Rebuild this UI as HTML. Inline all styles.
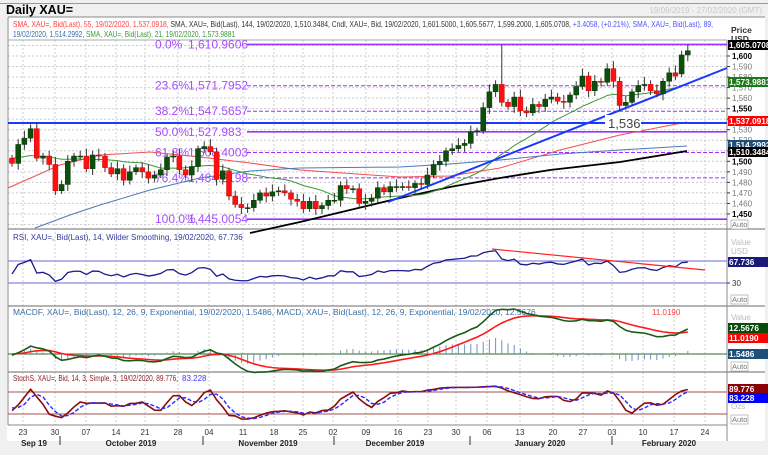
<!DOCTYPE html>
<html><head><meta charset="utf-8"><style>
html,body{margin:0;padding:0;background:#f0f0f0;width:768px;height:455px;overflow:hidden;font-family:"Liberation Sans",sans-serif}
svg{position:absolute;left:0;top:0}
</style></head><body>
<svg id="s" width="768" height="455" xmlns="http://www.w3.org/2000/svg" font-family="Liberation Sans, sans-serif">
<rect x="0" y="0" width="768" height="455" fill="#f0f0f0"/>
<rect x="0" y="3" width="768" height="1" fill="#999"/>
<rect x="7" y="17" width="758" height="424" fill="#fff"/>
<text x="6" y="14" font-size="12.5" font-weight="bold" fill="#000">Daily XAU=</text>
<text x="762" y="13" font-size="8" fill="#c8c8c8" text-anchor="end">19/09/2019 - 27/02/2020 (GMT)</text>
<text x="13" y="27" font-size="8" textLength="700" lengthAdjust="spacingAndGlyphs"><tspan fill="#ff4040">SMA, XAU=, Bid(Last),  55,  19/02/2020, 1,537.0918, </tspan><tspan fill="#333">SMA, XAU=, Bid(Last),   144,  19/02/2020, 1,510.3484, Cndl, XAU=, Bid,  19/02/2020, 1,601.5000, 1,605.5677, 1,599.2000, 1,605.0708, </tspan><tspan fill="#5050ff">+3.4058, (+0.21%), SMA, XAU=, Bid(Last),  89,</tspan></text>
<text x="13" y="37" font-size="8" textLength="222" lengthAdjust="spacingAndGlyphs"><tspan fill="#3a6ea5">19/02/2020,  1,514.2992, </tspan><tspan fill="#3a9a3a">SMA, XAU=, Bid(Last),  21,  19/02/2020, 1,573.9881</tspan></text>
<g id="g"></g>
</svg>
<script>
var NS="http://www.w3.org/2000/svg",G=document.getElementById("g");
function el(t,a,txt){var e=document.createElementNS(NS,t);for(var k in a)e.setAttribute(k,a[k]);if(txt!=null)e.textContent=txt;G.appendChild(e);return e;}
function ln(x1,y1,x2,y2,c,w,d){var a={x1:x1,y1:y1,x2:x2,y2:y2,stroke:c,"stroke-width":w||1};if(d)a["stroke-dasharray"]=d;return el("line",a);}
function tx(x,y,s,sz,c,o){var a={x:x,y:y,"font-size":sz,fill:c};if(o)for(var k in o)a[k]=o[k];return el("text",a,s);}
var L=8,R=727;
var wk=[23,55,86,116,145,178,209,243,274,303,333,366,398,428,456,487,520,553,583,612,643,674,705];
wk.forEach(function(x){ln(x,40,x,425,"#ccc",1,"2,2");});
function py(p){return 56+(1600-p)*1.053;}
for(var p=1440;p<=1610;p+=10){var y=py(p);if(y>40&&y<228)ln(L,y,R,y,"#ccc",1,"2,2");}
[229,306,372].forEach(function(y){ln(L,y,765,y,"#888",1.2);});
ln(L,17,L,425,"#888",1);ln(R,40,R,441,"#888",1);ln(L,425,R,425,"#888",1);
ln(L,17,765,17,"#888",1);ln(L,40,R,40,"#aaa",1);
var C=[1498,1516,1522,1531,1503,1505,1497,1472,1478,1500,1505,1505,1493,1506,1505,1494,1488,1493,1482,1490,1494,1490,1484,1487,1492,1504,1505,1492,1487,1495,1512,1514,1509,1483,1491,1467,1459,1456,1456,1463,1470,1467,1471,1472,1470,1464,1462,1455,1462,1455,1458,1463,1463,1477,1474,1474,1460,1462,1465,1475,1471,1476,1476,1476,1475,1479,1478,1487,1497,1500,1510,1512,1515,1517,1528,1529,1551,1566,1573,1556,1552,1561,1548,1546,1554,1552,1559,1561,1557,1556,1563,1571,1581,1567,1576,1575,1588,1576,1553,1556,1566,1572,1573,1567,1564,1576,1584,1581,1601,1605];
var N=C.length;function X(i){return 12+i*6.2;}
var fib=[["0.0%","1,610.9606",1610.96,0],["23.6%","1,571.7952",1571.80,1],["38.2%","1,547.5657",1547.57,1],["50.0%","1,527.983",1527.98,0],["61.8%","1,508.4003",1508.40,1],["76.4%","1,484.2198",1484.22,1],["100.0%","1,445.0054",1445.01,0]];
fib.forEach(function(f){var y=py(f[2]);ln(247,y,R,y,"#9b30ff",f[3]?1:1.6,f[3]?"4,2":null);
tx(155,y+4,f[0],12,"#a64dff");tx(188,y+4,f[1],12,"#a64dff");});
function pl(pts,c,w,d){var a={points:pts.map(function(p){return p[0]+","+p[1]}).join(" "),fill:"none",stroke:c,"stroke-width":w};if(d)a["stroke-dasharray"]=d;return el("polyline",a);}
pl([[8,188],[60,165],[100,155],[150,152],[200,157],[250,163],[300,170],[400,177],[450,176],[500,168],[560,150],[620,135],[687,122]],"#f05050",1);
pl([[35,228],[70,215],[100,205],[150,190],[200,178],[250,171],[300,168],[400,167],[450,164],[500,160],[560,154],[620,150],[687,146]],"#4a7ab8",1);
pl([[250,233],[300,222],[350,210],[400,198],[450,187],[500,178],[550,170],[620,162],[687,151]],"#000",1.8);
var hist=[1500,1505,1510,1515,1510,1505,1500,1498,1500,1502,1505,1506,1504,1500,1498,1500,1502,1505,1500,1498];var A=hist.concat(C);
var g21=[];for(var i=0;i<N;i++){var s=0;for(var k=0;k<21;k++)s+=A[i+20-k];g21.push([X(i),py(s/21)]);}
pl(g21,"#3a9a3a",1);
ln(388,202,R,68,"#1a3aff",2);ln(L,123,R,123,"#1a3aff",2);
el("rect",{x:605,y:115,width:36,height:16,fill:"#fff"});tx(608,128,"1,536",13,"#444");
var O=[1503].concat(C.slice(0,N-1));
for(var i=0;i<N;i++){var o=O[i],c=C[i];if(i==N-1)o=1601;if(i==N-2)o=1583;var hi=Math.max(o,c)+3+((i*7)%5),lo=Math.min(o,c)-3-((i*3)%4);if(i==79)hi=1611;
var x=X(i),up=c>=o,col=up?"#0b4f0b":"#ff1010";ln(x,py(hi),x,py(lo),"#333",1);
var y1=py(Math.max(o,c)),y2=py(Math.min(o,c));el("rect",{x:x-2.5,y:y1,width:5,height:Math.max(1,y2-y1),fill:col,stroke:up?"#063306":"#c00","stroke-width":0.5});}
tx(731,33,"Price",8.5,"#333",{"font-weight":"bold"});tx(731,42,"USD",8.5,"#333",{"font-weight":"bold"});
for(var p=1450;p<=1600;p+=10){var y=py(p);ln(R,y,R+3,y,"#333",1);tx(732,y+3,"1,"+String(p).slice(1),8,p%50==0?"#000":"#777",p%50==0?{"font-weight":"bold"}:{});}
function box(y,t,bg){el("rect",{x:728,y:y-5,width:40,height:10,fill:bg});tx(729,y+3,t,8.3,"#fff",{"font-weight":"bold"});}
box(45,"1,605.0708","#000");box(82,"1,573.9881","#1a7a1a");box(121,"1,537.0918","#ff0000");box(145,"1,514.2992","#1f4e79");box(152,"1,510.3484","#000");
function auto(y){el("rect",{x:731,y:y-7,width:17,height:9,fill:"#fff",stroke:"#999","stroke-width":0.6});tx(732,y,"Auto",7.5,"#777");}
auto(227);auto(302);auto(369);auto(422);
tx(13,240,"RSI, XAU=, Bid(Last),  14, Wilder Smoothing, 19/02/2020, 67.736",8,"#333a99");
ln(L,261,R,261,"#8888dd",1.2);ln(L,283,R,283,"#8888dd",1.2);
var ag=0,al=0,rsi=[];for(var i=1;i<A.length;i++){var d=A[i]-A[i-1];if(i<=14){ag+=Math.max(d,0)/14;al+=Math.max(-d,0)/14;}else{ag=(ag*13+Math.max(d,0))/14;al=(al*13+Math.max(-d,0))/14;}if(i>=20)rsi.push(100-100/(1+ag/(al||0.01)));}
pl(rsi.map(function(v,i){return [X(i),Math.max(248,Math.min(282,261+(70-v)*0.575))]}),"#1a1a8c",1.3);
ln(492,249,705,270,"#ff2020",1.2);
tx(731,245,"Value",8,"#bbb");tx(731,254,"USD",8,"#bbb");box(262,"67.736","#1a1a7a");tx(732,286,"30",8,"#333");ln(R,283,R+3,283,"#333",1);
el("text",{x:13,y:315,"font-size":8,fill:"#3a6ea5",textLength:525,lengthAdjust:"spacingAndGlyphs"},"MACDF, XAU=, Bid(Last),  12, 26, 9, Exponential,  19/02/2020, 1.5486, MACD, XAU=, Bid(Last),  12, 26, 9, Exponential,  19/02/2020, 12.5676,");
tx(652,315,"11.0190",8,"#ff4040");
ln(L,354,R,354,"#2a6a2a",1);
var e12=A[0],e26=A[0],sg=0,m=[],sgl=[];for(var i=0;i<A.length;i++){e12+=(A[i]-e12)*2/13;e26+=(A[i]-e26)*2/27;var mv=e12-e26;sg+=(mv-sg)*0.2;if(i>=20){m.push(mv);sgl.push(sg);}}
for(var i=0;i<N;i++){var h=(m[i]-sgl[i])*2;ln(X(i),354,X(i),354-h,"#6f8fbf",1);}
pl(sgl.map(function(v,i){return [X(i),354-v*2]}),"#ff1a1a",1.6);
pl(m.map(function(v,i){return [X(i),354-v*2]}),"#1a5a1a",1.6);
tx(731,320,"Value",8,"#bbb");box(328,"12.5676","#0a4a0a");box(338,"11.0190","#ff0000");box(354,"1.5486","#1f4e79");
el("text",{x:13,y:381,"font-size":8,fill:"#8b1a1a",textLength:165,lengthAdjust:"spacingAndGlyphs"},"StochS, XAU=, Bid,  14, 3, Simple, 3, 19/02/2020, 89.776,");
tx(182,381,"83.228",8,"#3a3aff");
ln(L,392,R,392,"#a05050",1);ln(L,414,R,414,"#a05050",1);
var k=[];for(var i=0;i<A.length;i++){var s=A.slice(Math.max(0,i-13),i+1),hh=Math.max.apply(0,s)+4,ll=Math.min.apply(0,s)-4;k.push(100*(A[i]-ll)/(hh-ll));}
var ks=[],ds=[];for(var i=2;i<A.length;i++)ks.push((k[i]+k[i-1]+k[i-2])/3);for(var i=2;i<ks.length;i++)ds.push((ks[i]+ks[i-1]+ks[i-2])/3);
var off=A.length-N;
pl(C.map(function(_,i){return [X(i),392+(80-ks[i+off-2])*0.367]}),"#8b0a0a",1.6);
pl(C.map(function(_,i){return [X(i),392+(80-ds[i+off-4])*0.367]}),"#2a2aff",1.4,"4,2");
box(389,"89.776","#8b0000");box(398,"83.228","#0000ff");tx(731,409,"Ozs",8,"#bbb");
var dl=["23","30","07","14","21","28","04","11","18","25","02","09","16","23","30","06","13","20","27","03","10","17","24"];
wk.forEach(function(x,i){tx(x,435,dl[i],8,"#333",{"text-anchor":"middle"});});
[[34,"Sep 19"],[131,"October 2019"],[268,"November 2019"],[395,"December 2019"],[540,"January 2020"],[669,"February 2020"]].forEach(function(a){tx(a[0],446,a[1],8,"#222",{"text-anchor":"middle","font-weight":"bold"});});
[60,203,334,470,612].forEach(function(x){ln(x,436,x,445,"#333",1);});
</script>
</body></html>
